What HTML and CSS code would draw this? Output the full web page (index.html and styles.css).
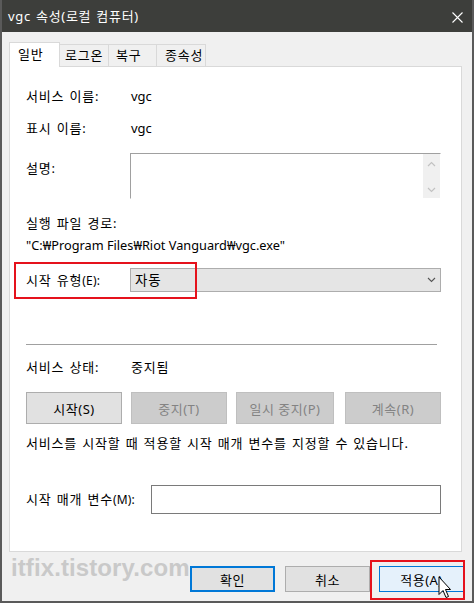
FILE: index.html
```html
<!DOCTYPE html>
<html lang="ko">
<head>
<meta charset="utf-8">
<title>vgc 속성(로컬 컴퓨터)</title>
<link rel="stylesheet" href="styles.css">
</head>
<body>
<div class="window">
  <div class="titlebar">
    <span class="title">vgc 속성(로컬 컴퓨터)</span>
    <svg class="close" width="11" height="11" viewBox="0 0 11 11"><path d="M0.5 0.5 L10.5 10.5 M10.5 0.5 L0.5 10.5" stroke="#fff" stroke-width="1.1" fill="none"/></svg>
  </div>
  <div class="main">
    <div class="tabs">
      <div class="tab active t1">일반</div>
      <div class="tab t2">로그온</div>
      <div class="tab t3">복구</div>
      <div class="tab t4">종속성</div>
    </div>
    <div class="panel">
      <div class="row row-name"><span class="label">서비스 이름:</span><span class="value latin">vgc</span></div>
      <div class="row row-display"><span class="label">표시 이름:</span><span class="value latin">vgc</span></div>
      <div class="row row-desc">
        <span class="label label-top">설명:</span>
        <div class="textarea">
          <div class="vscroll">
            <svg width="9" height="6" viewBox="0 0 9 6"><path d="M1 5 L4.5 1.5 L8 5" stroke="#c2c2c2" stroke-width="1.2" fill="none"/></svg>
            <svg width="9" height="6" viewBox="0 0 9 6"><path d="M1 1 L4.5 4.5 L8 1" stroke="#c2c2c2" stroke-width="1.2" fill="none"/></svg>
          </div>
        </div>
      </div>
      <div class="line row-path-label">실행 파일 경로:</div>
      <div class="line row-path latin">"C:₩Program Files₩Riot Vanguard₩vgc.exe"</div>
      <div class="row row-type">
        <span class="label">시작 유형<span class="small">(E):</span></span>
        <div class="combo">
          <span class="combo-text">자동</span>
          <svg width="9" height="6" viewBox="0 0 9 6"><path d="M1 1 L4.5 4.5 L8 1" stroke="#555" stroke-width="1.1" fill="none"/></svg>
        </div>
        <div class="highlight hl-type"></div>
      </div>
      <div class="sep"></div>
      <div class="row row-status"><span class="label">서비스 상태:</span><span class="value">중지됨</span></div>
      <div class="btn-row">
        <button class="sbtn">시작(S)</button>
        <button class="sbtn disabled">중지(T)</button>
        <button class="sbtn disabled wide">일시 중지(P)</button>
        <button class="sbtn disabled last">계속(R)</button>
      </div>
      <div class="line row-hint">서비스를 시작할 때 적용할 시작 매개 변수를 지정할 수 있습니다.</div>
      <div class="row row-param">
        <span class="label label-wide">시작 매개 변수<span class="small">(M):</span></span>
        <div class="input"></div>
      </div>
    </div>
    <div class="footer">
      <span class="watermark">itfix.tistory.com</span>
      <button class="btn btn-ok">확인</button>
      <button class="btn btn-cancel">취소</button>
      <div class="apply-wrap">
        <button class="btn btn-apply">적용(A)</button>
        <div class="highlight hl-apply"></div>
        <svg class="cursor" width="14" height="24" viewBox="0 0 14 24"><path d="M1 1 V18.5 L5 14.5 L8 21.5 L10.5 20.5 L7.5 13.5 H12.5 Z" fill="#fff" stroke="#000" stroke-width="1" stroke-linejoin="miter"/></svg>
      </div>
    </div>
  </div>
</div>
</body>
</html>
```

FILE: styles.css
```css
* { box-sizing: border-box; }
html, body { margin: 0; padding: 0; }
body {
  background: #f0f0f0;
  font-family: "Noto Sans", "Noto Sans CJK KR", sans-serif;
  font-size: 13px;
  letter-spacing: 0.8px;
  word-spacing: 1px;
  color: #000;
}
.latin { letter-spacing: 0; word-spacing: 0; }
.small { font-size: 12px; letter-spacing: 0.2px; }
.window {
  width: 474px;
  height: 603px;
  border: 2px solid #5a5a5a;
  border-top: none;
  background: #f0f0f0;
  overflow: hidden;
}
.titlebar {
  height: 32px;
  background: #3d3e3b;
  color: #fff;
  display: flex;
  align-items: center;
  justify-content: space-between;
  padding: 0 11px 0 8px;
  margin: 0 -2px;
}
.title { font-size: 13px; line-height: 32px; letter-spacing: 0.7px; }
.close { margin-top: 2px; }
.main { padding: 10px 8px 0 7px; }
.tabs { display: flex; align-items: flex-end; height: 24px; }
.tab {
  height: 22px;
  line-height: 20px;
  border: 1px solid #d9d9d9;
  border-bottom: none;
  border-left: none;
  background: #f0f0f0;
}
.tab.active {
  height: 25px;
  margin-bottom: -1px;
  border-left: 1px solid #d9d9d9;
  background: #fff;
  position: relative;
  z-index: 1;
  line-height: 22px;
}
.t1 { width: 51px; padding-left: 8px; }
.t2 { width: 49px; padding-left: 5px; }
.t3 { width: 48px; padding-left: 7px; }
.t4 { width: 49px; padding-left: 8px; }
.panel {
  width: 453px;
  height: 486px;
  background: #fff;
  border: 1px solid #d9d9d9;
  padding: 0 20px 0 16px;
}
.row { display: flex; align-items: center; position: relative; }
.label { width: 104px; flex: none; line-height: 20px; }
.label-wide { width: 125px; }
.value { line-height: 20px; padding-left: 1px; }
.line { line-height: 20px; height: 20px; }
.row-name { margin-top: 19px; height: 20px; }
.row-display { margin-top: 12px; height: 20px; }
.row-desc { margin-top: 15px; height: 45px; align-items: flex-start; }
.label-top { margin-top: 5px; }
.textarea {
  width: 311px;
  height: 46px;
  border: 1px solid #a0a0a0;
  border-right-color: #fff;
  border-bottom-color: #fff;
  display: flex;
  justify-content: flex-end;
}
.vscroll {
  width: 17px;
  background: #f0f0f0;
  display: flex;
  flex-direction: column;
  align-items: center;
  justify-content: space-between;
  padding: 7px 0 5px;
}
.row-path-label { margin-top: 15px; }
.row-path { margin-top: 2px; font-size: 12.75px; }
.row-type { margin-top: 13px; height: 24px; }
.combo {
  width: 311px;
  height: 24px;
  border: 1px solid #adadad;
  background: #e5e5e5;
  display: flex;
  align-items: center;
  justify-content: space-between;
  padding: 0 4px 0 4px;
  line-height: 20px;
}
.combo-text { font-size: 13.5px; }
.highlight {
  position: absolute;
  border: 2px solid #e5121c;
}
.hl-type { left: -12px; top: -6px; width: 183px; height: 37px; }
.sep { height: 1px; width: 411px; background: #a0a0a0; margin-top: 52px; }
.row-status { margin-top: 12px; height: 20px; }
.btn-row { display: flex; margin-top: 15px; height: 32px; }
.sbtn {
  width: 96px;
  height: 32px;
  margin-right: 9px;
  font: inherit;
  letter-spacing: 0.5px;
  padding: 0;
  background: #e1e1e1;
  border: 1px solid #adadad;
  color: #000;
}
.sbtn.wide { width: 98px; margin-right: 11px; }
.sbtn.last { margin-right: 0; }
.sbtn.disabled { background: #cccccc; border-color: #bfbfbf; color: #838383; }
.row-hint { margin-top: 9px; }
.row-param { margin-top: 32px; height: 29px; }
.input { width: 290px; height: 29px; border: 1px solid #7a7a7a; background: #fff; }
.footer {
  display: flex;
  justify-content: flex-end;
  padding-top: 14px;
  position: relative;
}
.watermark {
  position: absolute;
  left: 2px;
  top: 2px;
  font: bold 24px/28px "Liberation Sans", sans-serif;
  letter-spacing: 0.1px;
  word-spacing: 0;
  color: #c9c9c9;
}
.btn {
  width: 85px;
  height: 26px;
  font: inherit;
  letter-spacing: 0.5px;
  padding: 0;
  background: #e1e1e1;
  border: 1px solid #adadad;
  color: #000;
}
.btn-ok { border: 2px solid #0078d7; }
.btn-cancel { margin-left: 10px; }
.apply-wrap { position: relative; margin-left: 9px; }
.btn-apply { background: #e5f1fb; border-color: #0078d7; }
.hl-apply { left: -9px; top: -6px; width: 95px; height: 40px; }
.cursor { position: absolute; left: 59px; top: 10px; }
```
